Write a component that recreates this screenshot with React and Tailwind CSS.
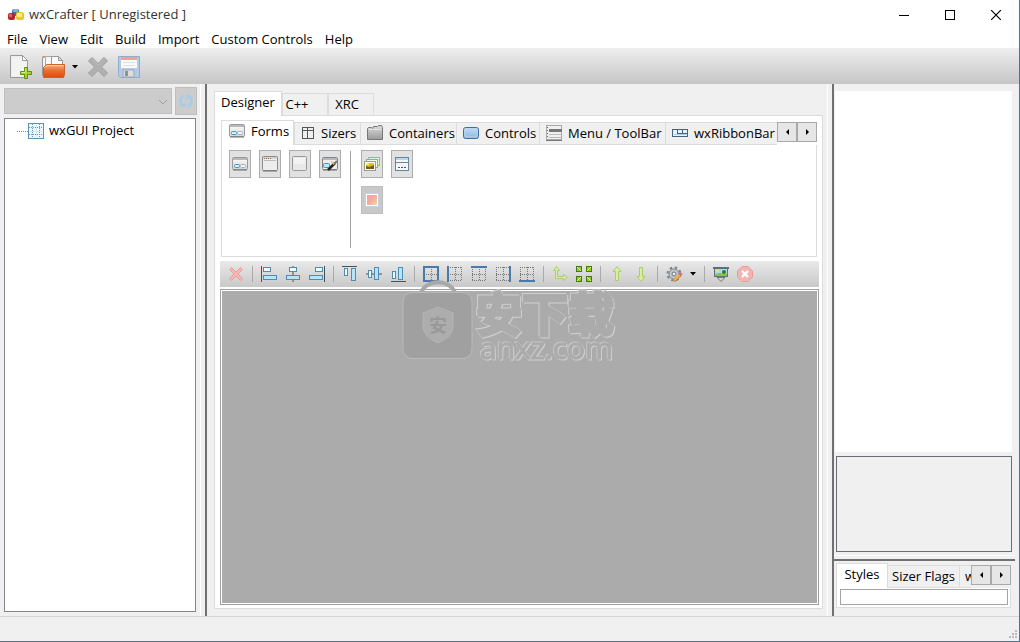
import { useState } from 'react'

/* ---------- icons ---------- */

const AppIcon = () => (
  <svg width="18" height="18" viewBox="0 0 18 18" aria-hidden="true">
    <rect x="5" y="3" width="7" height="7" rx="2" fill="#3a6fb8" />
    <rect x="6" y="3" width="5" height="3" rx="1" fill="#7db4e6" />
    <rect x="1" y="7" width="7" height="7" rx="2" fill="#b3262a" />
    <rect x="2" y="8" width="3" height="3" rx="1" fill="#e0696b" />
    <rect x="9" y="6" width="8" height="8" rx="2" fill="#e8c62c" />
    <rect x="10" y="7" width="5" height="4" rx="1" fill="#fbf08a" />
  </svg>
)

const NewFileIcon = () => (
  <svg width="24" height="24" viewBox="0 0 24 24" aria-hidden="true">
    <path d="M2.500 .5h12l5 5v17h-17z" fill="#eee" stroke="#9a9a9a" />
    <path d="M4 2h10v5h5v14H4z" fill="#f3f3f3" />
    <path d="M14.500 .5v5h5z" fill="#fff" stroke="#9a9a9a" />
    <path d="M16.500 12.500h3v4h4v3h-4v4h-3v-4h-4v-3h4z" fill="#a6d22e" stroke="#5f8f13" />
    <path d="M17.500 13.500v4h-4" fill="none" stroke="#d4ee85" />
  </svg>
)

const OpenIcon = () => (
  <svg width="26" height="24" viewBox="0 0 26 24" aria-hidden="true">
    <path d="M2.500 2.500h6v18h-6z" fill="#f3f3f3" stroke="#999" />
    <path d="M2.500 1.500h4l2 3" fill="#fff" stroke="#e08a3c" />
    <path d="M5.500 1.500h8l4 4v12h-12z" fill="#f6f6f6" stroke="#aaa" />
    <path d="M11.500 1.500h7l4 4v12h-11z" fill="#fafafa" stroke="#999" />
    <path d="M18.500 1.500v4h4z" fill="#ddd" stroke="#999" />
    <defs>
      <linearGradient id="folder" x1="0" y1="0" x2="0" y2="1">
        <stop offset="0" stopColor="#f7b183" />
        <stop offset=".45" stopColor="#ee6f2d" />
        <stop offset="1" stopColor="#dd4a10" />
      </linearGradient>
    </defs>
    <path d="M3.500 12.500l3-3h18v10l-1 3h-20z" fill="url(#folder)" stroke="#c9622c" />
    <path d="M5 12.500l2-2h16" fill="none" stroke="#fbd0b0" />
  </svg>
)

const BigCrossIcon = () => (
  <svg width="22" height="22" viewBox="0 0 22 22" aria-hidden="true">
    <path d="M5 1.500l6 6 6-6 3.500 3.500-6 6 6 6-3.500 3.500-6-6-6 6L1.500 17l6-6-6-6z" fill="#b0b0b0" stroke="#a0a0a0" />
    <path d="M5 3l6 6 6-6" fill="none" stroke="#bcbcbc" />
  </svg>
)

const SaveIcon = () => (
  <svg width="22" height="22" viewBox="0 0 22 22" aria-hidden="true">
    <path d="M.5 .5h21v21h-19l-2-2z" fill="#b3cbe8" stroke="#8fabce" />
    <rect x="3" y="1" width="16" height="11" fill="#fafafa" />
    <rect x="3" y="1" width="16" height="3" fill="#eea2a0" />
    <path d="M5 6.500h12M5 9.500h12" stroke="#e0e0e0" />
    <rect x="5" y="14" width="11" height="7" fill="#dcdcdc" stroke="#a3a9b3" />
    <rect x="7" y="15" width="3" height="5" fill="#8d9199" />
  </svg>
)

const RefreshIcon = () => (
  <svg width="16" height="16" viewBox="0 0 16 16" fill="none" aria-hidden="true">
    <path d="M6 2.500C1.500 4.500 1.500 10.500 5 13M10 13.500c4.500-2 4.500-8 1-10.500" stroke="#a3cdea" strokeWidth="2.400" />
    <path d="M2.500 14h5V9zM13.500 2h-5v5z" fill="#a3cdea" />
  </svg>
)

const ProjectIcon = () => (
  <svg width="16" height="16" viewBox="0 0 16 16" shapeRendering="crispEdges" aria-hidden="true">
    <rect x=".5" y=".5" width="15" height="15" fill="#eef7fc" stroke="#5b93b3" />
    <path d="M4.500 1v14M11.500 1v14M1 4.500h14M1 11.500h14" stroke="#5f9fc5" strokeDasharray="1 1" fill="none" />
    <path d="M8 2v12M2 8h12" stroke="#cfe6f3" fill="none" />
  </svg>
)

const FormIcon = () => (
  <svg width="16" height="14" viewBox="0 0 16 14" aria-hidden="true">
    <defs>
      <linearGradient id="form" x1="0" y1="0" x2="0" y2="1">
        <stop offset="0" stopColor="#fff" />
        <stop offset="1" stopColor="#d4d4d4" />
      </linearGradient>
    </defs>
    <rect x=".5" y=".5" width="15" height="12" rx="1" fill="url(#form)" stroke="#999" />
    <path d="M1 2h14" stroke="#b4b9bd" strokeWidth="2" />
    <path d="M1 13h14" stroke="#707070" />
    <rect x="2.500" y="7.500" width="5" height="3" rx="1" fill="#d7efff" stroke="#3c94d0" />
    <rect x="8.500" y="7.500" width="5" height="3" rx="1" fill="#f2f5f7" stroke="#a6b3bd" />
  </svg>
)

const FrameIcon = () => (
  <svg width="16" height="16" viewBox="0 0 16 16" aria-hidden="true">
    <rect x=".5" y=".5" width="15" height="14" rx="1" fill="#f0f0f0" stroke="#888" />
    <path d="M1 2h14" stroke="#d4d4d4" strokeWidth="2" />
    <path d="M2 2.500h8" stroke="#8a6a5c" strokeDasharray="1 1" />
    <rect x="2" y="4" width="12" height="9" fill="#ededed" />
    <path d="M2 4.500h12" stroke="#bbb" />
    <path d="M1 15h14" stroke="#707070" />
  </svg>
)

const PanelIcon = () => (
  <svg width="16" height="16" viewBox="0 0 16 16" aria-hidden="true">
    <rect x=".5" y=".5" width="14" height="14" rx="1" fill="#e8e8e8" stroke="#999" />
    <path d="M2 2h11v6H2z" fill="#f3f3f3" />
  </svg>
)

const WizardIcon = () => (
  <svg width="16" height="16" viewBox="0 0 16 16" aria-hidden="true">
    <rect x=".5" y="1.500" width="15" height="12" rx="1" fill="#eee" stroke="#858585" />
    <path d="M1 3h14" stroke="#b4b9bd" strokeWidth="2" />
    <path d="M1 14h14" stroke="#707070" />
    <rect x="1.500" y="7.500" width="6" height="4" rx="1" fill="#bde6ff" stroke="#3c94d0" />
    <path d="M6 14l7-7" stroke="#222" strokeWidth="2.500" />
    <path d="M12 8l3-3" stroke="#777" strokeWidth="2" />
    <path d="M9 5l1 2 2 0-1 2" stroke="#e0c23c" fill="none" />
  </svg>
)

const ImagesIcon = () => (
  <svg width="16" height="16" viewBox="0 0 16 16" aria-hidden="true">
    <rect x="4.500" y="1.500" width="11" height="8" fill="#dff0df" stroke="#8fb5b5" />
    <rect x="2.500" y="3.500" width="11" height="8" fill="#f6fbe8" stroke="#8cb57f" />
    <rect x=".5" y="5.500" width="11" height="9" fill="#fff" stroke="#999" />
    <rect x="2" y="7" width="8" height="6" fill="#e6bf12" />
    <path d="M2 10l3 1 5-2v4H2z" fill="#6d6310" />
    <rect x="2" y="7" width="3" height="2" fill="#fae95a" />
  </svg>
)

const DialogIcon = () => (
  <svg width="16" height="16" viewBox="0 0 16 16" shapeRendering="crispEdges" aria-hidden="true">
    <rect x="1.500" y="1.500" width="13" height="13" fill="#f4f7f9" stroke="#6b8499" />
    <path d="M2 3h12" stroke="#b9d7ea" strokeWidth="2" />
    <path d="M2 6.500h12" stroke="#6b8499" />
    <path d="M4 11.500h2M7 11.500h2M10 11.500h2" stroke="#555" />
  </svg>
)

const BitmapIcon = () => (
  <svg width="16" height="16" viewBox="0 0 16 16" aria-hidden="true">
    <defs>
      <linearGradient id="bmp" x1="0" y1="0" x2="1" y2="1">
        <stop offset="0" stopColor="#efa3a3" />
        <stop offset=".5" stopColor="#f2ae9e" />
        <stop offset="1" stopColor="#f6dba0" />
      </linearGradient>
    </defs>
    <rect x="1.500" y="1.500" width="13" height="13" fill="#fff" stroke="#c3d3e4" />
    <rect x="3" y="3" width="10" height="10" fill="url(#bmp)" />
  </svg>
)

const SizersIcon = () => (
  <svg width="14" height="14" viewBox="0 0 14 14" shapeRendering="crispEdges" aria-hidden="true">
    <path d="M1.500 1.500h11v11h-11zM1 4.500h12M6.500 2v11" stroke="#555" fill="none" />
  </svg>
)

const ContainersIcon = () => (
  <svg width="16" height="16" viewBox="0 0 16 16" aria-hidden="true">
    <defs>
      <linearGradient id="cont" x1="0" y1="0" x2="0" y2="1">
        <stop offset="0" stopColor="#dcdcdc" />
        <stop offset="1" stopColor="#9b9b9b" />
      </linearGradient>
    </defs>
    <path d="M.5 14.500v-11l1-1h3l1 1 1-2h4l1-1h3l1 2v12z" fill="url(#cont)" stroke="#777" />
    <path d="M2 4.500h12" stroke="#e6e6e6" />
  </svg>
)

const ControlsIcon = () => (
  <svg width="16" height="14" viewBox="0 0 16 14" aria-hidden="true">
    <defs>
      <linearGradient id="ctl" x1="0" y1="0" x2="0" y2="1">
        <stop offset="0" stopColor="#c8def3" />
        <stop offset="1" stopColor="#8ab5e0" />
      </linearGradient>
    </defs>
    <rect x=".5" y="1.500" width="15" height="11" rx="2" fill="url(#ctl)" stroke="#3e6da3" />
    <rect x="2" y="3" width="12" height="8" rx="1" fill="none" stroke="#b9d4ee" />
  </svg>
)

const MenuIcon = () => (
  <svg width="16" height="16" viewBox="0 0 16 16" shapeRendering="crispEdges" aria-hidden="true">
    <rect x=".5" y=".5" width="15" height="14" fill="#f0f0f0" stroke="#aaa" />
    <path d="M3 5h13" stroke="#777" strokeWidth="3" />
    <path d="M3 9.500h12M3 12.500h12" stroke="#bbb" />
    <path d="M1.500 2v12" stroke="#666" strokeDasharray="1 2" />
    <path d="M0 15h16" stroke="#777" />
  </svg>
)

const RibbonIcon = () => (
  <svg width="16" height="10" viewBox="0 0 16 10" shapeRendering="crispEdges" aria-hidden="true">
    <rect x=".5" y="1.500" width="15" height="7" fill="#e6f2fa" stroke="#45617c" />
    <path d="M5.500 2v3M10.500 2v3M5 5.500h10" stroke="#45617c" />
    <path d="M2 6.500h12" stroke="#a9cde6" />
  </svg>
)

const RedCross = () => (
  <svg width="16" height="16" viewBox="0 0 16 16" aria-hidden="true">
    <path d="M3.500 1.500L8 6l4.500-4.500 2 2L10 8l4.500 4.500-2 2L8 10l-4.500 4.500-2-2L6 8 1.500 3.500z" fill="#f6b7b2" stroke="#e8a09b" />
  </svg>
)

// a guide line and two bars: x, y, width, height
const bars = {
  left: { line: 'M.5 0v16', a: [2, 1, 8, 5], b: [2, 9, 14, 5] },
  hcenter: { line: 'M8 0v16', a: [4, 1, 8, 5], b: [1, 9, 14, 5] },
  right: { line: 'M15.500 0v16', a: [6, 1, 8, 5], b: [0, 9, 14, 5] },
  top: { line: 'M0 .5h15', a: [2, 2, 4, 8], b: [9, 2, 5, 13] },
  vcenter: { line: 'M0 8h16', a: [2, 4, 4, 8], b: [8, 1, 5, 13] },
  bottom: { line: 'M1 15.500h15', a: [2, 5, 4, 8], b: [8, 1, 5, 13] },
}

const AlignIcon = ({ kind }) => {
  const { line, a, b } = bars[kind]
  return (
    <svg width="16" height="16" viewBox="0 0 16 16" aria-hidden="true">
      <path d={line} stroke="#44525c" />
      {[a, b].map(([x, y, w, h], i) => (
        <rect key={i} x={x + 0.5} y={y + 0.5} width={w - 1} height={h - 1} fill={i ? '#b8e4fb' : '#effaff'} stroke="#4b8db5" />
      ))}
    </svg>
  )
}

const borderPaths = {
  all: 'M1 1h14v14H1z',
  left: 'M1 0v16',
  top: 'M0 1h16',
  right: 'M15 0v16',
  bottom: 'M0 15h16',
}

const BorderIcon = ({ kind }) => (
  <svg width="16" height="16" viewBox="0 0 16 16" shapeRendering="crispEdges" fill="none" aria-hidden="true">
    <path d="M1.500 1v14M8.500 1v14M14.500 1v14M1 1.500h14M1 8.500h14M1 14.500h14" stroke="#777" strokeDasharray="1 1" />
    <path d={borderPaths[kind]} stroke="#4a7aab" strokeWidth="2" />
  </svg>
)

const ProportionIcon = () => (
  <svg width="16" height="16" viewBox="0 0 16 16" aria-hidden="true">
    <path d="M4.500 .5l3 4h-2v6h6v-2l4 3-4 3v-2h-8v-8h-2z" fill="#d8eea4" stroke="#a9cf66" />
  </svg>
)

const ExpandIcon = () => (
  <svg width="18" height="16" viewBox="0 0 18 16" aria-hidden="true">
    {[[1, 0], [11, 0], [1, 10], [11, 10]].map(([x, y]) => (
      <g key={`${x}-${y}`}>
        <rect x={x + 0.5} y={y + 0.5} width="5" height="5" fill="#8fce1f" stroke="#437a10" />
        <path
          d={(x < 9) === (y < 9) ? `M${x + 1} ${y + 1}l4 4` : `M${x + 5} ${y + 1}l-4 4`}
          stroke="#e4fa9e"
        />
      </g>
    ))}
  </svg>
)

const ArrowIcon = ({ down }) => (
  <svg width="16" height="16" viewBox="0 0 16 16" className={down ? 'rotate-180' : ''} aria-hidden="true">
    <path d="M8 .5l4 5h-2.500v9h-3v-9H4z" fill="#d8eea4" stroke="#a9cf66" />
  </svg>
)

const GearIcon = () => (
  <svg width="18" height="16" viewBox="0 0 18 16" fill="none" aria-hidden="true">
    <circle cx="8" cy="8" r="6.500" stroke="#7d838a" strokeWidth="2" strokeDasharray="2.500 2.600" />
    <circle cx="8" cy="8" r="5" fill="#c4c9ce" stroke="#7d838a" />
    <circle cx="8" cy="8" r="2" fill="#eee" stroke="#6d737a" />
    <path d="M8 15l6-6" stroke="#c2741c" strokeWidth="3" />
    <path d="M8 14.500l6-6" stroke="#f9b650" strokeWidth="2" />
    <path d="M13.500 9l2-2" stroke="#cc6f86" strokeWidth="3" />
  </svg>
)

const PreviewIcon = () => (
  <svg width="16" height="16" viewBox="0 0 16 16" aria-hidden="true">
    <path d="M4 11.500h8l-4 4z" fill="#d4d4d4" stroke="#777" />
    <rect x="1.500" y="2.500" width="13" height="8" fill="#a9d8f2" stroke="#64727c" />
    <path d="M0 2h16" stroke="#5d6d7a" strokeWidth="2" />
    <path d="M2 10V8l4-1 8 1v2z" fill="#8cbf52" />
    <circle cx="11" cy="6" r="2" fill="#2f7f1a" />
    <rect x="3" y="4" width="3" height="2" fill="#f6dd72" />
  </svg>
)

const StopIcon = () => (
  <svg width="16" height="16" viewBox="0 0 16 16" aria-hidden="true">
    <path d="M5 .5h6L15.500 5v6L11 15.500H5L.5 11V5z" fill="#f3b5b2" stroke="#e79a97" />
    <path d="M5 5l6 6M11 5l-6 6" stroke="#fff" strokeWidth="2.400" />
  </svg>
)

const Caret = () => (
  <svg width="6" height="4" viewBox="0 0 6 4" aria-hidden="true">
    <path d="M0 0h6L3 3.500z" fill="#000" />
  </svg>
)

/* ---------- pieces ---------- */

const ScrollArrows = () => (
  <div className="flex shrink-0">
    {['left', 'right'].map((dir) => (
      <button key={dir} aria-label={`Scroll tabs ${dir}`} className="w-5 h-5 border border-[#a9a9a9] bg-[#e6e6e6] flex items-center justify-center">
        <svg width="3" height="6" viewBox="0 0 3 6" aria-hidden="true">
          <path d={dir === 'left' ? 'M3 0v6L0 3z' : 'M0 0v6l3-3z'} fill="#000" />
        </svg>
      </button>
    ))}
  </div>
)

const Sash = () => (
  <div className="w-[7px] shrink-0 flex justify-end border-l border-white">
    <div className="w-[2px] bg-[#707070]" />
  </div>
)

const menus = ['File', 'View', 'Edit', 'Build', 'Import', 'Custom Controls', 'Help']

const mainTabs = [
  { name: 'Designer', cls: 'w-[68px]' },
  { name: 'C++', cls: 'w-[46px] pr-4' },
  { name: 'XRC', cls: 'w-[46px] pr-2' },
]

const paletteTabs = [
  { name: 'Forms', icon: FormIcon, cls: 'w-[73px] pl-[7px]' },
  { name: 'Sizers', icon: SizersIcon, cls: 'w-[66px] pl-[6px]' },
  { name: 'Containers', icon: ContainersIcon, cls: 'w-[96px] pl-[6px]' },
  { name: 'Controls', icon: ControlsIcon, cls: 'w-[83px] pl-[6px]' },
  { name: 'Menu / ToolBar', icon: MenuIcon, cls: 'w-[126px] pl-[6px]' },
  { name: 'wxRibbonBar', icon: RibbonIcon, cls: 'w-[112px] pl-[6px]' },
]

const formTools = [
  ['Dialog', FormIcon],
  ['Frame', FrameIcon],
  ['Panel', PanelIcon],
  ['Wizard', WizardIcon],
]

const designGroups = [
  [['Delete', <RedCross />]],
  [
    ['Align left', <AlignIcon kind="left" />],
    ['Center horizontally', <AlignIcon kind="hcenter" />],
    ['Align right', <AlignIcon kind="right" />],
  ],
  [
    ['Align top', <AlignIcon kind="top" />],
    ['Center vertically', <AlignIcon kind="vcenter" />],
    ['Align bottom', <AlignIcon kind="bottom" />],
  ],
  [
    ['All borders', <BorderIcon kind="all" />],
    ['Left border', <BorderIcon kind="left" />],
    ['Top border', <BorderIcon kind="top" />],
    ['Right border', <BorderIcon kind="right" />],
    ['Bottom border', <BorderIcon kind="bottom" />],
  ],
  [
    ['Proportion', <ProportionIcon />],
    ['Expand', <ExpandIcon />],
  ],
  [
    ['Move up', <ArrowIcon />],
    ['Move down', <ArrowIcon down />],
  ],
  [['Settings', <><GearIcon /><Caret /></>]],
  [
    ['Preview', <PreviewIcon />],
    ['Close preview', <StopIcon />],
  ],
]

const PaletteButton = ({ label, icon: Icon, disabled }) => (
  <button
    aria-label={label}
    disabled={disabled}
    className={`w-[22px] h-7 border flex items-center justify-center ${disabled ? 'bg-[#c9c9c9] border-[#bdbdbd]' : 'bg-[#e1e1e1] border-[#adadad]'}`}
  >
    <Icon />
  </button>
)

const TitleBar = () => (
  <header className="h-[30px] shrink-0 flex items-center pl-[7px] bg-white">
    <AppIcon />
    <h1 className="ml-1 flex-1 text-[13px] text-[#333]">wxCrafter [ Unregistered ]</h1>
    <button aria-label="Minimize" className="w-[46px] h-full flex items-center justify-center">
      <span className="w-[10px] h-px bg-black" />
    </button>
    <button aria-label="Maximize" className="w-[46px] h-full flex items-center justify-center">
      <span className="w-[10px] h-[10px] border border-black" />
    </button>
    <button aria-label="Close" className="w-[46px] h-full flex items-center justify-center">
      <svg width="10" height="10" viewBox="0 0 10 10" aria-hidden="true">
        <path d="M0 0l10 10M10 0L0 10" stroke="#000" strokeWidth="1.200" />
      </svg>
    </button>
  </header>
)

const MainToolbar = () => (
  <div className="h-9 shrink-0 flex items-center pl-2 pt-[2px] bg-linear-to-b from-[#eee] to-[#c6c6c6]">
    <button aria-label="New project" className="w-6"><NewFileIcon /></button>
    <button aria-label="Open project" className="ml-2 w-[38px] flex items-center justify-between"><OpenIcon /><Caret /></button>
    <button aria-label="Close project" disabled className="ml-[9px] w-[22px]"><BigCrossIcon /></button>
    <button aria-label="Save project" disabled className="ml-[9px] w-[22px]"><SaveIcon /></button>
  </div>
)

const ProjectPanel = () => (
  <aside className="w-[200px] shrink-0 flex flex-col pt-[3px] pb-1 pl-1 pr-[3px]">
    <div className="flex items-center gap-[3px]">
      <div className="relative flex-1">
        <select aria-label="Form" disabled className="w-full h-[26px] appearance-none bg-[#ccc] border border-[#bfbfbf]" />
        <svg width="10" height="6" viewBox="0 0 10 6" className="absolute right-1 top-[11px] pointer-events-none" fill="none" aria-hidden="true">
          <path d="M1 1l4 4 4-4" stroke="#a0a0a0" />
        </svg>
      </div>
      <button aria-label="Refresh" disabled className="w-[22px] h-7 bg-[#ccc] border border-[#bfbfbf] flex items-center justify-center">
        <RefreshIcon />
      </button>
    </div>
    <ul className="mt-[3px] mr-px flex-1 bg-white border border-[#828790] pt-[3px] pl-3">
      <li className="flex items-center text-[13px] leading-4">
        <span className="w-[11px] border-t border-dotted border-[#888]" />
        <ProjectIcon />
        <span className="ml-[5px] pb-[2px]">wxGUI Project</span>
      </li>
    </ul>
  </aside>
)

const Watermark = () => (
  <div className="absolute left-[181px] -top-[10px] flex pointer-events-none" aria-hidden="true">
    <svg width="74" height="80" viewBox="0 0 74 80">
      <path d="M18 15C23-2 49-2 54 15" fill="none" stroke="#a8a8a8" strokeWidth="4" />
      <rect x="1" y="12" width="69" height="66" rx="10" fill="#a0a0a0" />
      <path d="M11 12.500h49q10 0 10 10v46q0 10-10 10H11q-10 0-10-10v-46q0-10 10-10" fill="none" stroke="#b8b8b8" />
      <path d="M36 27l15 6v13q0 11-15 17-15-6-15-17V33z" fill="#adadad" stroke="#b4b4b4" />
      <text x="36" y="52" textAnchor="middle" fontSize="18" fontWeight="700" fontFamily="'Noto Sans CJK SC', sans-serif" fill="#999">安</text>
    </svg>
    <div className="flex flex-col">
      <span className="mt-[8px] h-[46px] text-[46px] leading-[46px] font-bold font-['Noto_Sans_CJK_SC',sans-serif] text-[#ababab] [-webkit-text-stroke:3px_#ababab] [filter:drop-shadow(1px_1px_0_#cfcfcf)_drop-shadow(-1px_-1px_0_#cfcfcf)]">安下载</span>
      <span className="h-7 pl-1 text-[30px] leading-7 text-[#ababab] [-webkit-text-stroke:1px_#ababab] [filter:drop-shadow(1px_1px_0_#cfcfcf)_drop-shadow(-1px_-1px_0_#c4c4c4)]">anxz.com</span>
    </div>
  </div>
)

const DesignPage = () => {
  const [palette, setPalette] = useState('Forms')
  return (
    <div className="flex-1 min-h-0 flex flex-col bg-white border border-[#dcdcdc] -mt-px pt-1 pb-[3px] pl-[5px] pr-[3px]">
      <div className="flex flex-col pl-px pr-[2px]">
        <div className="flex items-end h-[25px]">
          <div role="tablist" className="flex items-end flex-1 min-w-0 overflow-hidden">
            {paletteTabs.map(({ name, icon: Icon, cls }) => (
              <button
                key={name}
                role="tab"
                aria-selected={palette === name}
                onClick={() => setPalette(name)}
                className={`shrink-0 flex items-center gap-[6px] border-t border-l border-[#dcdcdc] whitespace-nowrap text-[13px] leading-4 ${cls} ${palette === name ? 'h-[25px] bg-white border-r pb-1' : 'h-[23px] bg-[#f0f0f0] border-b pb-px'}`}
              >
                <Icon />
                {name}
              </button>
            ))}
          </div>
          <div className="self-start mt-[2px]"><ScrollArrows /></div>
        </div>
        <div className="h-[112px] border border-t-0 border-[#dcdcdc] flex pt-[5px] pl-[7px]">
          <div className="flex gap-2">
            {formTools.map(([label, icon]) => <PaletteButton key={label} label={label} icon={icon} />)}
          </div>
          <div className="ml-[9px] mr-[10px] mt-px w-px h-[97px] bg-[#a0a0a0]" />
          <div className="grid grid-cols-2 gap-2 content-start">
            <PaletteButton label="Image list" icon={ImagesIcon} />
            <PaletteButton label="Popup window" icon={DialogIcon} />
            <PaletteButton label="Bitmap" icon={BitmapIcon} disabled />
          </div>
        </div>
      </div>

      <div className="mt-1 h-[26px] shrink-0 flex items-center pl-1 pb-px bg-linear-to-b from-[#e9e9e9] to-[#c9c9c9]">
        {designGroups.map((group, i) => (
          <div key={i} className="flex items-center">
            {i > 0 && <span className="mx-1 w-px h-4 bg-[#aaa]" />}
            {group.map(([label, icon]) => (
              <button key={label} aria-label={label} className={`h-6 flex items-center justify-center ${label === 'Settings' ? 'w-[38px] gap-[6px]' : 'w-6'}`}>
                {icon}
              </button>
            ))}
          </div>
        ))}
      </div>

      <div className="relative mt-[2px] flex-1 border border-[#a0a0a0] bg-white p-px">
        <div className="h-full bg-[#ababab]" />
        <Watermark />
      </div>
    </div>
  )
}

const Center = () => {
  const [tab, setTab] = useState('Designer')
  return (
    <main className="flex-1 min-w-0 flex flex-col pt-[7px] pb-[7px] pl-[7px] pr-1">
      <div role="tablist" className="relative z-10 flex items-end h-[25px]">
        {mainTabs.map(({ name, cls }) => (
          <button
            key={name}
            role="tab"
            aria-selected={tab === name}
            onClick={() => setTab(name)}
            className={`border-t border-l border-r border-[#dcdcdc] text-[13px] leading-4 ${cls} ${tab === name ? 'h-[25px] bg-white pb-1' : 'h-[23px] bg-[#f0f0f0] border-b pb-px'}`}
          >
            {name}
          </button>
        ))}
      </div>
      <DesignPage />
    </main>
  )
}

const Properties = () => (
  <aside className="w-[185px] shrink-0 flex flex-col pt-[7px]">
    <div className="flex-1 ml-px mr-[7px] bg-white" />
    <div className="mt-1 ml-[2px] mr-[7px] h-[96px] border border-[#6a6d75]" />
    <div className="mt-[3px] mr-1 h-[6px] border-t border-t-white border-b-2 border-b-[#707070]" />
    <div className="mt-[2px] ml-[2px] mr-2 mb-2">
      <div className="flex h-[25px] items-end">
        <div role="tablist" className="relative z-10 flex items-end flex-1 min-w-0 overflow-hidden text-[13px] leading-4 whitespace-nowrap">
          <button role="tab" aria-selected="true" className="shrink-0 w-[52px] h-[25px] bg-white border border-b-0 border-[#dcdcdc] pb-1">Styles</button>
          <button role="tab" aria-selected="false" className="shrink-0 w-[72px] h-[23px] border border-l-0 border-[#dcdcdc] pb-px">Sizer Flags</button>
          <button role="tab" aria-selected="false" className="shrink-0 h-[23px] border border-l-0 border-[#dcdcdc] pl-[5px] pb-px">wxSizerItem</button>
        </div>
        <div className="self-start mt-[2px]"><ScrollArrows /></div>
      </div>
      <div className="h-5 bg-white border border-t-0 border-[#dcdcdc] pt-px pl-[3px] pr-[2px]">
        <input type="text" aria-label="Style" className="block w-full h-4 bg-white border border-[#a3a3a3] outline-none text-xs" />
      </div>
    </div>
  </aside>
)

const StatusBar = () => (
  <footer className="h-[25px] shrink-0 flex items-end justify-end border-t border-[#d5d5d5] pr-px pb-[2px]">
    <svg width="9" height="9" viewBox="0 0 9 9" fill="#bbb" aria-hidden="true">
      {[[6, 0], [3, 3], [6, 3], [0, 6], [3, 6], [6, 6]].map(([x, y]) => (
        <rect key={`${x}-${y}`} x={x} y={y} width="2" height="2" />
      ))}
    </svg>
  </footer>
)

export default function App() {
  return (
    <div className="h-screen flex flex-col bg-[#f0f0f0] text-black border-r border-b border-[#3c7d96] overflow-hidden font-['Open_Sans','Noto_Sans',sans-serif]">
      <TitleBar />
      <nav className="h-[18px] shrink-0 flex items-center bg-white pl-[7px] gap-3 text-[13px] leading-4">
        {menus.map((m) => <button key={m}>{m}</button>)}
      </nav>
      <MainToolbar />
      <div className="flex-1 min-h-0 flex">
        <ProjectPanel />
        <Sash />
        <Center />
        <Sash />
        <Properties />
      </div>
      <StatusBar />
    </div>
  )
}
